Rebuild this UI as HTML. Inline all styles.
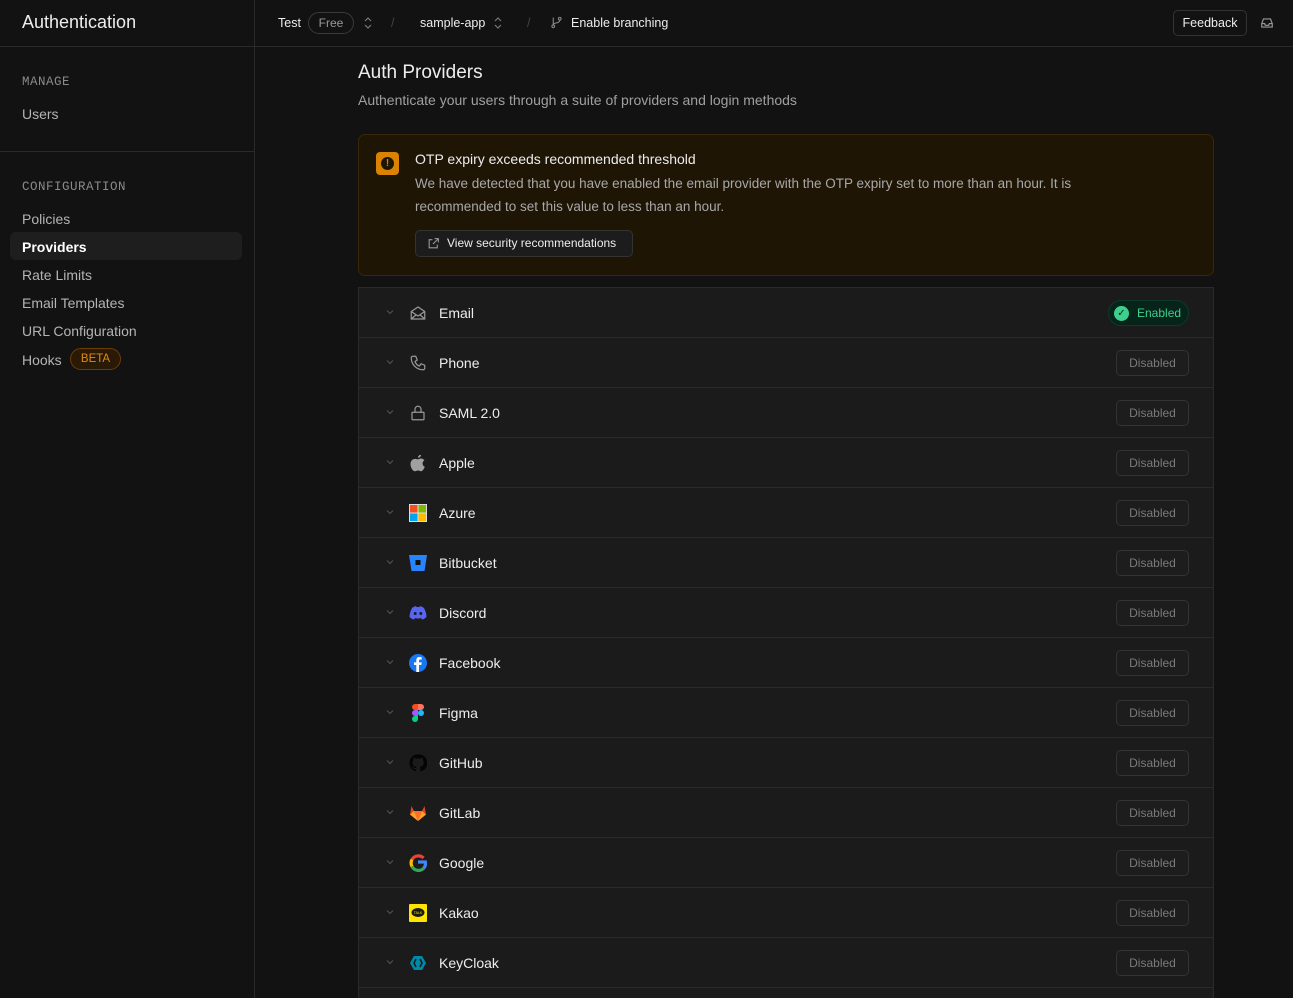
<!DOCTYPE html>
<html style="width:1293px;height:998px;overflow:hidden"><head><meta charset="utf-8"><style>
*{box-sizing:border-box;margin:0;padding:0}
body{width:1293px;height:998px;overflow:hidden;background:#121212;font-family:"Liberation Sans",sans-serif;color:#ededed;position:relative}
.side{position:absolute;left:0;top:0;width:255px;height:998px;border-right:1px solid #2a2a2a}
.side .hd{height:47px;border-bottom:1px solid #2a2a2a;padding:12px 22px;font-size:18px;color:#ededed}
.sec{font-family:"Liberation Mono",monospace;font-size:12.5px;color:#8a8a8a;letter-spacing:.5px;position:absolute;left:22px}
.it{position:absolute;left:22px;font-size:14px;color:#b4b4b4}
.top{position:absolute;left:255px;top:0;right:0;height:47px;border-bottom:1px solid #2a2a2a;font-size:12.5px}
.top span{position:absolute;top:16px}
.main{position:absolute;left:358px;width:856px}
.alert{position:absolute;left:358px;top:134px;width:856px;height:142px;background:#1e1505;border:1px solid #3a2608;border-radius:7px}
.list{position:absolute;left:358px;top:287px;width:856px;height:711px;overflow:hidden;border:1px solid #2a2a2a;border-bottom:none;background:#1b1b1b}
.row{height:50px;border-bottom:1px solid #2a2a2a;position:relative}
.row .ch{position:absolute;left:26px;top:19px}
.row .ic{position:absolute;left:50px;top:16px;width:18px;height:18px}
.row .nm{position:absolute;left:80px;top:17px;font-size:14px;color:#ededed}
.dis{position:absolute;right:24px;top:12px;width:73px;height:26px;border:1px solid #333;border-radius:5px;font-size:12px;color:#7a7a7a;text-align:center;line-height:24px;background:#1d1d1d}
.ud{position:absolute;top:16px}
</style></head><body>
<div class="side"><div class="hd">Authentication</div>
<div class="sec" style="top:75px">MANAGE</div>
<div class="it" style="top:106px">Users</div>
<div style="position:absolute;top:151px;left:0;width:254px;border-top:1px solid #2a2a2a"></div>
<div class="sec" style="top:180px">CONFIGURATION</div>
<div class="it" style="top:211px">Policies</div>
<div style="position:absolute;left:10px;top:232px;width:232px;height:28px;background:#1e1e1e;border-radius:6px"></div>
<div class="it" style="top:239px;color:#fff;font-weight:bold">Providers</div>
<div class="it" style="top:267px">Rate Limits</div>
<div class="it" style="top:295px">Email Templates</div>
<div class="it" style="top:323px">URL Configuration</div>
<div class="it" style="top:352px">Hooks</div>
<div style="position:absolute;left:70px;top:348px;width:51px;height:22px;border:1px solid #6b3d07;background:#2a1a05;border-radius:11px;color:#e08a14;font-size:11.5px;text-align:center;line-height:20px">BETA</div>
</div>
<div class="top">
<span style="left:23px">Test</span>
<div style="position:absolute;left:53px;top:12px;width:46px;height:22px;border:1px solid #3a3a3a;border-radius:11px;color:#999;font-size:12px;text-align:center;line-height:20px">Free</div>
<svg class="ud" style="left:108px" width="10" height="14" viewBox="0 0 10 14" fill="none" stroke="#777" stroke-width="1.2"><path d="M2 5l3-3 3 3M2 9l3 3 3-3"/></svg>
<span style="left:136px;color:#444">/</span>
<span style="left:165px">sample-app</span>
<svg class="ud" style="left:238px" width="10" height="14" viewBox="0 0 10 14" fill="none" stroke="#777" stroke-width="1.2"><path d="M2 5l3-3 3 3M2 9l3 3 3-3"/></svg>
<span style="left:272px;color:#444">/</span>
<svg style="position:absolute;left:295px;top:16px" width="13" height="13" viewBox="0 0 24 24" fill="none" stroke="#888" stroke-width="2"><circle cx="6" cy="19" r="2.5"/><circle cx="18" cy="5" r="2.5"/><path d="M6 3v13M18 8c0 6-12 4-12 8"/></svg>
<span style="left:316px">Enable branching</span>
<div style="position:absolute;left:918px;top:10px;width:74px;height:26px;border:1px solid #333;border-radius:5px;text-align:center;line-height:24px;font-size:12.5px">Feedback</div>
<svg style="position:absolute;left:1005px;top:16px" width="14" height="14" viewBox="0 0 24 24" fill="none" stroke="#999" stroke-width="2"><path d="M3 13l3-8h12l3 8v6H3z M3 13h5l1 3h6l1-3h5"/></svg>
</div>
<div class="main" style="top:62px;font-size:19px">Auth Providers</div>
<div class="main" style="top:92px;font-size:14px;color:#a0a0a0">Authenticate your users through a suite of providers and login methods</div>
<div class="alert">
<div style="position:absolute;left:17px;top:17px;width:23px;height:23px;background:#d98300;border-radius:4px"><div style="position:absolute;left:5px;top:5px;width:13px;height:13px;background:#1e1505;border-radius:50%;color:#d98300;font-size:10px;font-weight:bold;text-align:center;line-height:13px">!</div></div>
<div style="position:absolute;left:56px;top:16px;font-size:14px;color:#ededed">OTP expiry exceeds recommended threshold</div>
<div style="position:absolute;left:56px;top:37px;width:720px;font-size:13.5px;line-height:23px;color:#a8a8a8">We have detected that you have enabled the email provider with the OTP expiry set to more than an hour. It is recommended to set this value to less than an hour.</div>
<div style="position:absolute;left:56px;top:95px;width:218px;height:27px;border:1px solid #333;border-radius:5px;background:#1c1c1c;font-size:12px;line-height:25px;padding-left:31px">View security recommendations
<svg style="position:absolute;left:11px;top:6px" width="13" height="13" viewBox="0 0 24 24" fill="none" stroke="#999" stroke-width="2"><path d="M14 3h7v7M21 3l-10 10M19 14v6H4V5h6"/></svg></div>
</div>
<div class="list">
<div class="row"><svg class="ch" width="10" height="10" viewBox="0 0 10 10"><path d="M2 3.5l3 3 3-3" stroke="#555" fill="none"/></svg><svg class="ic" viewBox="0 0 24 24" fill="none" stroke="#999" stroke-width="1.6"><path d="M3 10l9-6 9 6v10H3z M3 10l9 6 9-6M3 20l7-6M21 20l-7-6"/></svg><div class="nm">Email</div>
<div style="position:absolute;right:24px;top:12px;width:81px;height:26px;border-radius:13px;background:#07241a;border:1px solid #0d3a29"><div style="position:absolute;left:5px;top:5px;width:15px;height:15px;border-radius:50%;background:#3ecf8e;color:#07241a;font-size:10px;text-align:center;line-height:15px">✓</div><span style="position:absolute;left:28px;top:5px;font-size:12px;color:#3ecf8e">Enabled</span></div></div>
<div class="row"><svg class="ch" width="10" height="10" viewBox="0 0 10 10"><path d="M2 3.5l3 3 3-3" stroke="#555" fill="none"/></svg><svg class="ic" viewBox="0 0 24 24" fill="none" stroke="#999" stroke-width="1.6"><path d="M5 3h4l2 5-3 2c1 3 3 5 6 6l2-3 5 2v4c0 1-1 2-2 2C10 21 3 14 3 5c0-1 1-2 2-2z"/></svg><div class="nm">Phone</div><div class="dis">Disabled</div></div>
<div class="row"><svg class="ch" width="10" height="10" viewBox="0 0 10 10"><path d="M2 3.5l3 3 3-3" stroke="#555" fill="none"/></svg><svg class="ic" viewBox="0 0 24 24" fill="none" stroke="#999" stroke-width="1.6"><rect x="4" y="11" width="16" height="10" rx="1"/><path d="M8 11V7a4 4 0 018 0v4"/></svg><div class="nm">SAML 2.0</div><div class="dis">Disabled</div></div>
<div class="row"><svg class="ch" width="10" height="10" viewBox="0 0 10 10"><path d="M2 3.5l3 3 3-3" stroke="#555" fill="none"/></svg><svg class="ic" viewBox="0 0 24 24" fill="#a0a0a0"><path d="M16 1c0 2-1.5 4-4 4 0-2 1.5-4 4-4zM12 7c1.5 0 2.5-1 4-1 2 0 3.5 1 4.5 2.5-3.5 2-3 7 .5 8.5-1 3-3 6-5 6-1.5 0-2-1-4-1s-2.5 1-4 1C5 23 2 18 2 13.5 2 9 5 6.5 8 6.5c1.5 0 2.5 0.5 4 .5z"/></svg><div class="nm">Apple</div><div class="dis">Disabled</div></div>
<div class="row"><svg class="ch" width="10" height="10" viewBox="0 0 10 10"><path d="M2 3.5l3 3 3-3" stroke="#555" fill="none"/></svg><svg class="ic" viewBox="0 0 18 18"><rect width="18" height="18" fill="#ddd"/><rect x="1" y="1" width="7.5" height="7.5" fill="#f25022"/><rect x="9.5" y="1" width="7.5" height="7.5" fill="#7fba00"/><rect x="1" y="9.5" width="7.5" height="7.5" fill="#00a4ef"/><rect x="9.5" y="9.5" width="7.5" height="7.5" fill="#ffb900"/></svg><div class="nm">Azure</div><div class="dis">Disabled</div></div>
<div class="row"><svg class="ch" width="10" height="10" viewBox="0 0 10 10"><path d="M2 3.5l3 3 3-3" stroke="#555" fill="none"/></svg><svg class="ic" viewBox="0 0 18 18"><path d="M0 1h18l-2.5 16h-13z" fill="#2684ff"/><rect x="6.5" y="6" width="5" height="5" fill="#111"/></svg><div class="nm">Bitbucket</div><div class="dis">Disabled</div></div>
<div class="row"><svg class="ch" width="10" height="10" viewBox="0 0 10 10"><path d="M2 3.5l3 3 3-3" stroke="#555" fill="none"/></svg><svg class="ic" viewBox="0 0 18 18"><path d="M3 4c2-1.5 4-2 4-2l.5 1h3l.5-1s2 .5 4 2c1.5 3 2.5 6 2.5 9-1.5 1.5-3.5 2.5-4.5 2.5l-1-1.5c-2 .6-4 .6-6 0l-1 1.5C4 15.5 2 14.5.5 13 .5 10 1.5 7 3 4z" fill="#5865f2"/><circle cx="6.2" cy="9.5" r="1.5" fill="#1b1b1b"/><circle cx="11.8" cy="9.5" r="1.5" fill="#1b1b1b"/></svg><div class="nm">Discord</div><div class="dis">Disabled</div></div>
<div class="row"><svg class="ch" width="10" height="10" viewBox="0 0 10 10"><path d="M2 3.5l3 3 3-3" stroke="#555" fill="none"/></svg><svg class="ic" viewBox="0 0 18 18"><circle cx="9" cy="9" r="9" fill="#1877f2"/><path d="M10 18v-7h2.3l.4-2.6H10V6.8c0-.7.3-1.3 1.4-1.3h1.3V3.2s-1.1-.2-2.2-.2C8.3 3 7.3 4.3 7.3 6.4v2H5v2.6h2.3v7z" fill="#fff"/></svg><div class="nm">Facebook</div><div class="dis">Disabled</div></div>
<div class="row"><svg class="ch" width="10" height="10" viewBox="0 0 10 10"><path d="M2 3.5l3 3 3-3" stroke="#555" fill="none"/></svg><svg class="ic" viewBox="0 0 18 18"><path d="M6 0h3v6H6a3 3 0 010-6z" fill="#f24e1e"/><path d="M9 0h3a3 3 0 010 6H9z" fill="#ff7262"/><path d="M6 6h3v6H6a3 3 0 010-6z" fill="#a259ff"/><circle cx="12" cy="9" r="3" fill="#1abcfe"/><path d="M6 12h3v3a3 3 0 11-3-3z" fill="#0acf83"/></svg><div class="nm">Figma</div><div class="dis">Disabled</div></div>
<div class="row"><svg class="ch" width="10" height="10" viewBox="0 0 10 10"><path d="M2 3.5l3 3 3-3" stroke="#555" fill="none"/></svg><svg class="ic" viewBox="0 0 24 24"><path d="M12 .5a11.5 11.5 0 00-3.6 22.4c.6.1.8-.2.8-.6v-2c-3.2.7-3.9-1.5-3.9-1.5-.5-1.3-1.3-1.7-1.3-1.7-1-.7.1-.7.1-.7 1.2.1 1.8 1.2 1.8 1.2 1 1.8 2.8 1.3 3.4 1 .1-.8.4-1.3.8-1.6-2.6-.3-5.3-1.3-5.3-5.7 0-1.3.5-2.3 1.2-3.1-.1-.3-.5-1.5.1-3.1 0 0 1-.3 3.2 1.2a11 11 0 015.8 0c2.2-1.5 3.2-1.2 3.2-1.2.6 1.6.2 2.8.1 3.1.7.8 1.2 1.8 1.2 3.1 0 4.4-2.7 5.4-5.3 5.7.4.4.8 1.1.8 2.2v3.3c0 .3.2.7.8.6A11.5 11.5 0 0012 .5z" fill="#050505"/></svg><div class="nm">GitHub</div><div class="dis">Disabled</div></div>
<div class="row"><svg class="ch" width="10" height="10" viewBox="0 0 10 10"><path d="M2 3.5l3 3 3-3" stroke="#555" fill="none"/></svg><svg class="ic" viewBox="0 0 18 18"><path d="M9 17L1 10.5 2.5 2l2.5 5h8l2.5-5L17 10.5z" fill="#e24329"/><path d="M9 17L5 7h8z" fill="#fc6d26"/><path d="M1 10.5L5 7l4 10zM17 10.5L13 7 9 17z" fill="#fca326"/></svg><div class="nm">GitLab</div><div class="dis">Disabled</div></div>
<div class="row"><svg class="ch" width="10" height="10" viewBox="0 0 10 10"><path d="M2 3.5l3 3 3-3" stroke="#555" fill="none"/></svg><svg class="ic" viewBox="0 0 18 18" fill="none" stroke-width="3.2"><path d="M14.5 4A7.4 7.4 0 003 5.5" stroke="#ea4335"/><path d="M3 5.5a7.4 7.4 0 000 7" stroke="#fbbc05"/><path d="M3 12.5a7.4 7.4 0 0011.5 2" stroke="#34a853"/><path d="M14.5 14.5A7.4 7.4 0 0016.4 8H9" stroke="#4285f4"/></svg><div class="nm">Google</div><div class="dis">Disabled</div></div>
<div class="row"><svg class="ch" width="10" height="10" viewBox="0 0 10 10"><path d="M2 3.5l3 3 3-3" stroke="#555" fill="none"/></svg><svg class="ic" viewBox="0 0 18 18"><rect width="18" height="18" rx="1" fill="#fee500"/><ellipse cx="9" cy="8.5" rx="6.5" ry="4.5" fill="#191919"/><text x="9" y="10" font-size="3.5" fill="#fee500" text-anchor="middle" font-family="Liberation Sans">TALK</text></svg><div class="nm">Kakao</div><div class="dis">Disabled</div></div>
<div class="row"><svg class="ch" width="10" height="10" viewBox="0 0 10 10"><path d="M2 3.5l3 3 3-3" stroke="#555" fill="none"/></svg><svg class="ic" viewBox="0 0 18 18"><path d="M5 2h8l4 7-4 7H5L1 9z" fill="#008aaa"/><path d="M7 5L5 9l2 4M11 5l2 4-2 4" stroke="#1b1b1b" stroke-width="1.6" fill="none"/></svg><div class="nm">KeyCloak</div><div class="dis">Disabled</div></div>
<div class="row"><svg class="ch" width="10" height="10" viewBox="0 0 10 10"><path d="M2 3.5l3 3 3-3" stroke="#555" fill="none"/></svg><svg class="ic" viewBox="0 0 18 18"><rect width="18" height="18" rx="2" fill="#0a66c2"/></svg><div class="nm">LinkedIn</div><div class="dis">Disabled</div></div>
</div>
</body></html>
